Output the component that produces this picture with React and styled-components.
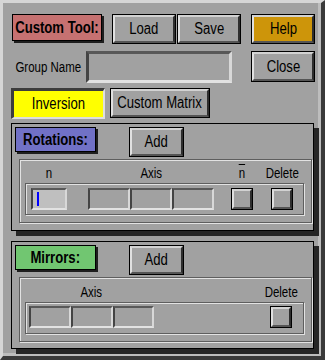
import React from 'react';
import styled, { createGlobalStyle } from 'styled-components';

const FONT = `"Liberation Sans", Arial, sans-serif`;

const GlobalStyle = createGlobalStyle`
    body {
        margin: 0;
        background: #a1a1a1;
    }
`;

const Window = styled.div`
    box-sizing: border-box;
    width: 325px;
    height: 360px;
    padding: 11px 0 0 8px;
    display: flex;
    flex-direction: column;
    background: #a1a1a1;
    border-style: solid;
    border-width: 3px 4px 4px 3px;
    border-color: #d6d6d6 #3a3a3a #3a3a3a #d6d6d6;
    box-shadow: inset -3px -3px 0 #bdbdbd;
    font-family: ${FONT};
    color: #000;
`;

const Text = styled.span`
    display: inline-block;
    white-space: nowrap;
    transform: scaleX(0.82);
    transform-origin: ${props => props.$origin || 'center'};
`;

const Row = styled.div`
    display: flex;
    align-items: flex-start;
    margin-top: ${props => props.$mt || 0}px;
`;

const Tag = styled.div`
    box-sizing: border-box;
    width: ${props => props.$w}px;
    height: ${props => props.$h}px;
    margin-left: ${props => props.$ml || 0}px;
    display: flex;
    align-items: center;
    justify-content: center;
    background: ${props => props.$bg};
    border: 1px solid #000;
    box-shadow: 2px 2px 0 #1e1e1e;
    font: bold 16px ${FONT};
`;

const Button = styled.button`
    box-sizing: border-box;
    width: ${props => props.$w}px;
    height: ${props => props.$h || 30}px;
    margin: 0 0 0 ${props => props.$ml || 0}px;
    padding: 0;
    border: 1px solid #000;
    background: ${props => props.$bg || '#a1a1a1'};
    font: 16px ${FONT};
    color: #000;
`;

const Face = styled.span`
    box-sizing: border-box;
    width: 100%;
    height: 100%;
    display: flex;
    align-items: center;
    justify-content: center;
    border: 2px solid;
    border-color: #d2d2d2 #2e2e2e #555 #e0e0e0;
`;

const Pressed = styled.button`
    box-sizing: border-box;
    width: ${props => props.$w}px;
    height: ${props => props.$h}px;
    margin: 0;
    padding: 0;
    display: flex;
    align-items: center;
    justify-content: center;
    border-style: solid;
    border-width: 3px 2px 2px 3px;
    border-color: #3c3c3c #dedede #dedede #3c3c3c;
    background: ${props => props.$bg};
    font: 16px ${FONT};
    color: #000;
`;

const FieldLabel = styled.div`
    box-sizing: border-box;
    width: 75px;
    height: 32px;
    padding-right: 5px;
    display: flex;
    align-items: center;
    justify-content: flex-end;
    font-size: 14px;
`;

const Field = styled.div`
    box-sizing: border-box;
    width: ${props => props.$w}px;
    height: ${props => props.$h || 22}px;
    margin-left: ${props => props.$ml || 0}px;
    padding-left: 4px;
    display: flex;
    align-items: center;
    background: ${props => (props.$focus ? '#bfbfbf' : '#a1a1a1')};
    border-style: solid;
    border-width: ${props => props.$bw || 2}px;
    border-color: #585858 #d8d8d8 #e2e2e2 #444;
`;

const Caret = styled.span`
    width: 2px;
    height: 14px;
    background: #0000ff;
`;

const Group = styled.div`
    display: flex;
    margin-left: ${props => props.$ml || 0}px;
`;

const Frame = styled.section`
    box-sizing: border-box;
    width: 303px;
    height: 108px;
    margin-top: ${props => props.$mt || 0}px;
    padding: 3px 0 0 3px;
    border: 1px solid #000;
    box-shadow: 5px 5px 0 #262626;
`;

const Engraved = styled.div`
    box-sizing: border-box;
    width: 293px;
    height: ${props => props.$h}px;
    margin: 2px 0 0 4px;
    padding-left: 5px;
    border: 1px solid #5e5e5e;
    box-shadow: inset 1px 1px 0 #e2e2e2, 1px 1px 0 #e2e2e2;
`;

const Heads = styled.div`
    box-sizing: border-box;
    height: ${props => props.$h}px;
    padding: 0 0 2px ${props => props.$pl}px;
    display: flex;
    align-items: flex-end;
    font-size: 14px;
    line-height: 16px;
`;

const Head = styled.div`
    width: ${props => props.$w}px;
    margin-left: ${props => props.$ml || 0}px;
    display: flex;
    justify-content: center;
    white-space: nowrap;
`;

const Over = styled.span`
    text-decoration: overline;
`;

const Lane = styled.div`
    box-sizing: border-box;
    width: 279px;
    height: ${props => props.$h}px;
    padding: ${props => props.$pt}px 0 0 ${props => props.$pl}px;
    display: flex;
    align-items: flex-start;
    border: 1px solid #5e5e5e;
    box-shadow: inset 1px 1px 0 #e2e2e2, 1px 1px 0 #e2e2e2;
`;

const Btn = ({ children, ...rest }) => (
    <Button {...rest}>
        <Face>{children && <Text>{children}</Text>}</Face>
    </Button>
);

const App = () => {
    return (
        <Window>
            <GlobalStyle />
            <Row>
                <Tag $w={90} $h={27} $ml={1} $bg="#c67171"><Text>Custom Tool:</Text></Tag>
                <Btn $w={64} $ml={10}>Load</Btn>
                <Btn $w={64} $ml={1}>Save</Btn>
                <Btn $w={64} $ml={10} $bg="#cd950a">Help</Btn>
            </Row>
            <Row $mt={7}>
                <FieldLabel><Text $origin="right">Group Name</Text></FieldLabel>
                <Field $w={146} $h={32} $bw={3} />
                <Btn $w={64} $h={31} $ml={19}>Close</Btn>
            </Row>
            <Row $mt={5}>
                <Pressed $w={94} $h={31} $bg="#ffff00"><Text>Inversion</Text></Pressed>
                <Btn $w={100} $ml={5}>Custom Matrix</Btn>
            </Row>

            <Frame $mt={4}>
                <Row>
                    <Tag $w={81} $h={25} $bg="#7171c6"><Text>Rotations:</Text></Tag>
                    <Btn $w={55} $ml={33}>Add</Btn>
                </Row>
                <Engraved $h={64}>
                    <Heads $h={23} $pl={6}>
                        <Head $w={36}><Text>n</Text></Head>
                        <Head $w={126} $ml={21}><Text>Axis</Text></Head>
                        <Head $w={22} $ml={17}><Text><Over>n</Over></Text></Head>
                        <Head $w={22} $ml={18}><Text>Delete</Text></Head>
                    </Heads>
                    <Lane $h={32} $pt={4} $pl={5}>
                        <Field $w={36} $focus>
                            <Caret />
                        </Field>
                        <Group $ml={21}>
                            <Field $w={42} />
                            <Field $w={42} />
                            <Field $w={42} />
                        </Group>
                        <Btn $w={22} $h={22} $ml={17} />
                        <Btn $w={22} $h={22} $ml={18} />
                    </Lane>
                </Engraved>
            </Frame>

            <Frame $mt={10}>
                <Row>
                    <Tag $w={81} $h={25} $bg="#71c671"><Text>Mirrors:</Text></Tag>
                    <Btn $w={55} $ml={33}>Add</Btn>
                </Row>
                <Engraved $h={65}>
                    <Heads $h={24} $pl={4}>
                        <Head $w={125}><Text>Axis</Text></Head>
                        <Head $w={22} $ml={116}><Text>Delete</Text></Head>
                    </Heads>
                    <Lane $h={32} $pt={3} $pl={3}>
                        <Group>
                            <Field $w={42} />
                            <Field $w={42} />
                            <Field $w={41} />
                        </Group>
                        <Btn $w={22} $h={22} $ml={116} />
                    </Lane>
                </Engraved>
            </Frame>
        </Window>
    );
};

export default App;
